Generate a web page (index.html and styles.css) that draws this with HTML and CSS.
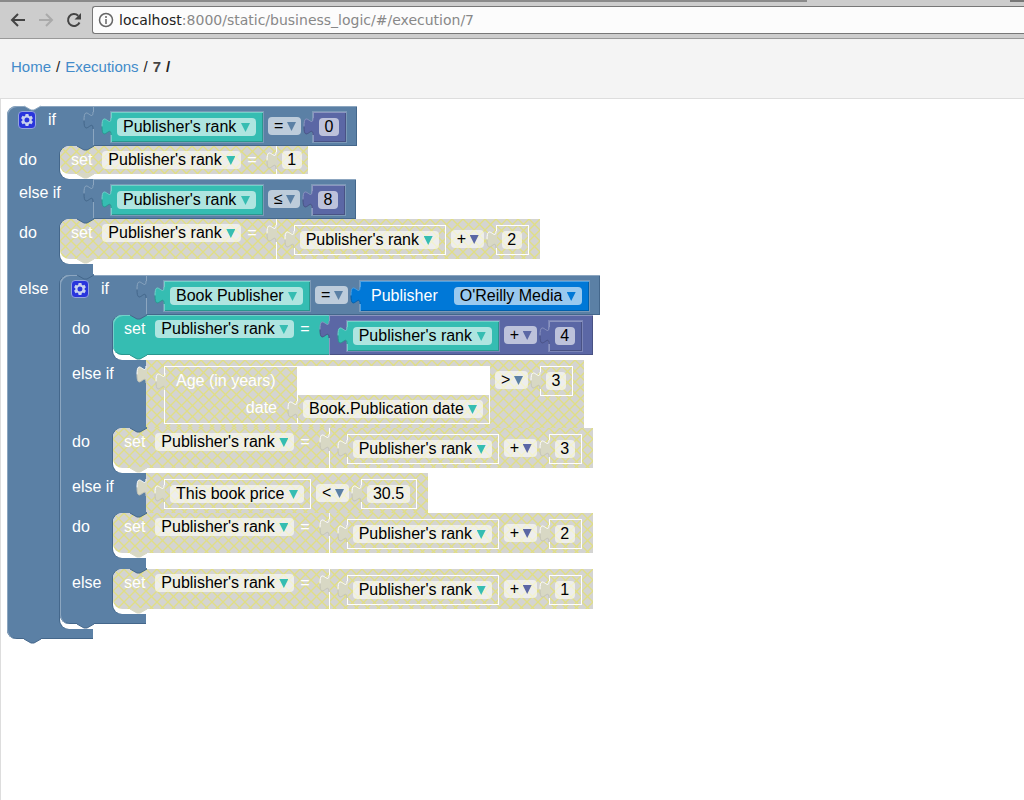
FILE: index.html
```html
<!DOCTYPE html>
<html lang="en">
<head>
<meta charset="utf-8">
<title>Execution 7</title>
<link rel="stylesheet" href="styles.css">
</head>
<body>
<svg class="symbols" aria-hidden="true">
  <symbol id="tab" viewBox="0 0 9 17" overflow="visible"><path class="tab-fill" d="M10 0H9c0 11-9-9-9 8.500s9-3 9 8.500h1z"/><path class="tab-line" d="M9 0c0 11-9-9-9 8.500"/><path class="tab-shade" d="M0 8.500c0 17.500 9-3 9 8.500"/></symbol>
  <symbol id="notch" viewBox="0 0 17 5" overflow="visible"><path class="notch-fill" d="M0-1V0l7 4h3l7-4v-1z"/><path class="notch-line" d="M0 0l7 4h3l7-4"/></symbol>
  <symbol id="gear" viewBox="1 1 16 16"><path fill="#c8d2ee" fill-rule="evenodd" d="M7.600 3h2.800l.4 1.800 1 .6 1.700-.6 1.400 2.400-1.300 1.200v1.200l1.300 1.200-1.400 2.400-1.700-.6-1 .6-.4 1.800H7.600l-.4-1.800-1-.6-1.700.6-1.400-2.400 1.300-1.200V8.400L3.100 7.200l1.400-2.400 1.700.6 1-.6zM9 6.500a2.500 2.500 0 1 0 0 5 2.500 2.500 0 0 0 0-5z"/></symbol>
</svg>

<header class="browser">
  <div class="tabs"><span class="tab-back"></span><span class="tab-front"></span><span class="tab-rest"></span></div>
  <div class="toolbar">
    <button class="nav" type="button" aria-label="Back"><svg viewBox="0 0 16 16"><path d="M15 8H2M8 2L2 8l6 6"/></svg></button>
    <button class="nav faded" type="button" aria-label="Forward"><svg viewBox="0 0 16 16"><path d="M1 8h13M8 2l6 6-6 6"/></svg></button>
    <button class="nav" type="button" aria-label="Reload"><svg viewBox="0 0 16 16"><path d="M13.500 10.500a6 6 0 1 1-1.300-6.800"/><path class="solid" d="M15 1v6.500H8.500z"/></svg></button>
    <label class="address">
      <svg class="info" viewBox="0 0 16 16"><circle cx="8" cy="8" r="6.500"/><path d="M8 7v5M8 4v2"/></svg>
      <span class="host">localhost</span><input class="path" type="text" value=":8000/static/business_logic/#/execution/7" aria-label="Address">
    </label>
  </div>
</header>

<nav class="crumbs" aria-label="Breadcrumb">
  <a href="#">Home</a><span>/</span><a href="#">Executions</a><span>/</span><b>7</b><b class="last">/</b>
</nav>

<main class="workspace">
<div class="if-block logic root">
  <svg class="notch top"><use href="#notch"/></svg>
  <div class="row">
    <div class="side first"><button class="gear" type="button" aria-label="Edit conditions"><svg><use href="#gear"/></svg></button><span>if</span></div>
    <div class="value inline logic"><svg class="tab"><use href="#tab"/></svg>
      <div class="value boxed var"><svg class="tab"><use href="#tab"/></svg><label class="field"><select aria-label="Variable"><option>Publisher's rank</option></select><i class="arrow"></i></label></div>
      <label class="field op"><select aria-label="Operator"><option>=</option></select><i class="arrow"></i></label>
      <div class="value boxed math"><svg class="tab"><use href="#tab"/></svg><input class="num" value="0" aria-label="Number"></div>
    </div>
  </div>
  <div class="row">
    <div class="side narrow">do</div>
    <div class="slot"><div class="well">
      <div class="setter off var"><svg class="notch top"><use href="#notch"/></svg><svg class="notch bottom"><use href="#notch"/></svg>
        <div class="setter-head"><span>set</span><label class="field"><select aria-label="Variable"><option>Publisher's rank</option></select><i class="arrow"></i></label><span class="eq">=</span></div>
        <div class="value off math"><svg class="tab"><use href="#tab"/></svg><input class="num" value="1" aria-label="Number"></div>
      </div>
    </div></div>
  </div>
  <div class="row">
    <div class="side">else if</div>
    <div class="value inline logic"><svg class="tab"><use href="#tab"/></svg>
      <div class="value boxed var"><svg class="tab"><use href="#tab"/></svg><label class="field"><select aria-label="Variable"><option>Publisher's rank</option></select><i class="arrow"></i></label></div>
      <label class="field op"><select aria-label="Operator"><option>≤</option></select><i class="arrow"></i></label>
      <div class="value boxed math"><svg class="tab"><use href="#tab"/></svg><input class="num" value="8" aria-label="Number"></div>
    </div>
  </div>
  <div class="row">
    <div class="side narrow">do</div>
    <div class="slot"><div class="well">
      <div class="setter off var"><svg class="notch top"><use href="#notch"/></svg><svg class="notch bottom"><use href="#notch"/></svg>
        <div class="setter-head"><span>set</span><label class="field"><select aria-label="Variable"><option>Publisher's rank</option></select><i class="arrow"></i></label><span class="eq">=</span></div>
        <div class="value inline off math"><svg class="tab"><use href="#tab"/></svg>
          <div class="value boxed off var"><svg class="tab"><use href="#tab"/></svg><label class="field"><select aria-label="Variable"><option>Publisher's rank</option></select><i class="arrow"></i></label></div>
          <label class="field op"><select aria-label="Operator"><option>+</option></select><i class="arrow"></i></label>
          <div class="value boxed off math"><svg class="tab"><use href="#tab"/></svg><input class="num" value="2" aria-label="Number"></div>
        </div>
      </div>
    </div></div>
  </div>
  <div class="arm"></div>
  <div class="row">
    <div class="side narrow">else</div>
    <div class="slot"><div class="well">

      <div class="if-block logic">
        <svg class="notch top"><use href="#notch"/></svg><svg class="notch bottom"><use href="#notch"/></svg>
        <div class="row">
          <div class="side first"><button class="gear" type="button" aria-label="Edit conditions"><svg><use href="#gear"/></svg></button><span>if</span></div>
          <div class="value inline logic"><svg class="tab"><use href="#tab"/></svg>
            <div class="value boxed var"><svg class="tab"><use href="#tab"/></svg><label class="field"><select aria-label="Variable"><option>Book Publisher</option></select><i class="arrow"></i></label></div>
            <label class="field op"><select aria-label="Operator"><option>=</option></select><i class="arrow"></i></label>
            <div class="value boxed ref"><svg class="tab"><use href="#tab"/></svg><span class="ref-name">Publisher</span><label class="field"><select aria-label="Publisher"><option>O'Reilly Media</option></select><i class="arrow"></i></label></div>
          </div>
        </div>
        <div class="row">
          <div class="side narrow">do</div>
          <div class="slot"><div class="well">
            <div class="setter var"><svg class="notch top"><use href="#notch"/></svg><svg class="notch bottom"><use href="#notch"/></svg>
              <div class="setter-head"><span>set</span><label class="field"><select aria-label="Variable"><option>Publisher's rank</option></select><i class="arrow"></i></label><span class="eq">=</span></div>
              <div class="value inline math"><svg class="tab"><use href="#tab"/></svg>
                <div class="value boxed var"><svg class="tab"><use href="#tab"/></svg><label class="field"><select aria-label="Variable"><option>Publisher's rank</option></select><i class="arrow"></i></label></div>
                <label class="field op"><select aria-label="Operator"><option>+</option></select><i class="arrow"></i></label>
                <div class="value boxed math"><svg class="tab"><use href="#tab"/></svg><input class="num" value="4" aria-label="Number"></div>
              </div>
            </div>
          </div></div>
        </div>
        <div class="row">
          <div class="side">else if</div>
          <div class="value inline off logic"><svg class="tab"><use href="#tab"/></svg>
            <div class="value call off"><svg class="tab"><use href="#tab"/></svg>
              <div class="call-labels"><span>Age (in years)</span><span class="arg">date</span></div>
              <div class="call-inputs">
                <div class="hole"></div>
                <div class="value off var"><svg class="tab"><use href="#tab"/></svg><label class="field"><select aria-label="Date"><option>Book.Publication date</option></select><i class="arrow"></i></label></div>
              </div>
            </div>
            <label class="field op"><select aria-label="Operator"><option>&gt;</option></select><i class="arrow"></i></label>
            <div class="value boxed off math"><svg class="tab"><use href="#tab"/></svg><input class="num" value="3" aria-label="Number"></div>
          </div>
        </div>
        <div class="row">
          <div class="side narrow">do</div>
          <div class="slot"><div class="well">
            <div class="setter off var"><svg class="notch top"><use href="#notch"/></svg><svg class="notch bottom"><use href="#notch"/></svg>
              <div class="setter-head"><span>set</span><label class="field"><select aria-label="Variable"><option>Publisher's rank</option></select><i class="arrow"></i></label><span class="eq">=</span></div>
              <div class="value inline off math"><svg class="tab"><use href="#tab"/></svg>
                <div class="value boxed off var"><svg class="tab"><use href="#tab"/></svg><label class="field"><select aria-label="Variable"><option>Publisher's rank</option></select><i class="arrow"></i></label></div>
                <label class="field op"><select aria-label="Operator"><option>+</option></select><i class="arrow"></i></label>
                <div class="value boxed off math"><svg class="tab"><use href="#tab"/></svg><input class="num" value="3" aria-label="Number"></div>
              </div>
            </div>
          </div></div>
        </div>
        <div class="row">
          <div class="side">else if</div>
          <div class="value inline off logic"><svg class="tab"><use href="#tab"/></svg>
            <div class="value boxed off var"><svg class="tab"><use href="#tab"/></svg><label class="field"><select aria-label="Variable"><option>This book price</option></select><i class="arrow"></i></label></div>
            <label class="field op"><select aria-label="Operator"><option>&lt;</option></select><i class="arrow"></i></label>
            <div class="value boxed off math"><svg class="tab"><use href="#tab"/></svg><input class="num wide" value="30.5" aria-label="Number"></div>
          </div>
        </div>
        <div class="row">
          <div class="side narrow">do</div>
          <div class="slot"><div class="well">
            <div class="setter off var"><svg class="notch top"><use href="#notch"/></svg><svg class="notch bottom"><use href="#notch"/></svg>
              <div class="setter-head"><span>set</span><label class="field"><select aria-label="Variable"><option>Publisher's rank</option></select><i class="arrow"></i></label><span class="eq">=</span></div>
              <div class="value inline off math"><svg class="tab"><use href="#tab"/></svg>
                <div class="value boxed off var"><svg class="tab"><use href="#tab"/></svg><label class="field"><select aria-label="Variable"><option>Publisher's rank</option></select><i class="arrow"></i></label></div>
                <label class="field op"><select aria-label="Operator"><option>+</option></select><i class="arrow"></i></label>
                <div class="value boxed off math"><svg class="tab"><use href="#tab"/></svg><input class="num" value="2" aria-label="Number"></div>
              </div>
            </div>
          </div></div>
        </div>
        <div class="arm"></div>
        <div class="row">
          <div class="side narrow">else</div>
          <div class="slot"><div class="well">
            <div class="setter off var"><svg class="notch top"><use href="#notch"/></svg><svg class="notch bottom"><use href="#notch"/></svg>
              <div class="setter-head"><span>set</span><label class="field"><select aria-label="Variable"><option>Publisher's rank</option></select><i class="arrow"></i></label><span class="eq">=</span></div>
              <div class="value inline off math"><svg class="tab"><use href="#tab"/></svg>
                <div class="value boxed off var"><svg class="tab"><use href="#tab"/></svg><label class="field"><select aria-label="Variable"><option>Publisher's rank</option></select><i class="arrow"></i></label></div>
                <label class="field op"><select aria-label="Operator"><option>+</option></select><i class="arrow"></i></label>
                <div class="value boxed off math"><svg class="tab"><use href="#tab"/></svg><input class="num" value="1" aria-label="Number"></div>
              </div>
            </div>
          </div></div>
        </div>
        <div class="arm foot"></div>
      </div>

    </div></div>
  </div>
  <div class="arm foot"></div>
  <svg class="notch bottom"><use href="#notch"/></svg>
</div>
</main>
</body>
</html>
```
FILE: styles.css
```css
* { box-sizing: border-box; }

body {
  margin: 0;
  min-height: 100vh;
  display: flex;
  flex-direction: column;
  background: #fff;
  font: 16px/18px "Liberation Sans", Arial, sans-serif;
}

.symbols { position: absolute; width: 0; height: 0; }

/* Browser bar */
.browser { background: #cdcdcd; border-bottom: 1px solid #999; }
.tabs { display: flex; height: 2px; }
.tab-back { flex: 807; background: #8a8a8a; }
.tab-front { flex: 203; }
.tab-rest { flex: 14; background: #777; }
.toolbar { display: flex; align-items: center; height: 36px; padding-left: 10px; gap: 12px; }
.nav { width: 16px; height: 16px; padding: 0; border: 0; background: none; }
.nav svg { display: block; width: 16px; height: 16px; fill: none; stroke: #444; stroke-width: 2; }
.nav .solid { fill: #444; stroke: none; }
.nav.faded svg { stroke: #aaa; }
.address {
  flex: 1;
  display: flex;
  align-items: center;
  height: 28px;
  margin-left: -2px;
  padding-left: 5px;
  border: 1px solid #777;
  border-right: 0;
  border-radius: 3px 0 0 3px;
  background: #fcfcfc;
  font: 14px/18px "DejaVu Sans", sans-serif;
}
.info { width: 16px; height: 16px; margin-right: 5px; fill: none; stroke: #666; stroke-width: 1.500; }
.host { color: #222; }
.path { flex: 1; min-width: 0; padding: 0; border: 0; background: none; font: inherit; color: #888; }

/* Breadcrumb */
.crumbs {
  display: flex;
  align-items: center;
  gap: 5px;
  height: 60px;
  padding: 0 11px 4px;
  background: #f4f4f4;
  border-bottom: 1px solid #ddd;
  font-size: 15px;
  color: #222;
}
.crumbs a { color: #428bca; text-decoration: none; }
.crumbs b:not(.last) { color: #444; }

/* Workspace */
.workspace {
  flex: 1;
  padding: 7px 0 0 6px;
  border-left: 1px solid #ddd;
  background: #fff;
  color: #fff;
}

.logic { --c: #5b80a5; --hi: #8ca6c0; --lo: #44678b; }
.math { --c: #5b67a5; --hi: #8c95c0; --lo: #495284; }
.var { --c: #35bdb2; --hi: #72d1c9; --lo: #2a978e; }
.ref { --c: #0078d7; --hi: #4da1e3; --lo: #0060ac; }

.if-block { position: relative; width: max-content; }
.row { display: flex; }
.side {
  width: 86px;
  padding: 5px 0 0 12px;
  background: #5b80a5;
  box-shadow: inset 1px 0 #8ca6c0;
}
.narrow { width: 53px; }
.first { display: flex; gap: 12px; padding-left: 11px; border-radius: 9px 0 0 0; box-shadow: inset 1px 1px #8ca6c0; }
.arm { width: 86px; height: 11px; background: #5b80a5; box-shadow: inset 1px 0 #8ca6c0; }
.foot { height: 10px; border-radius: 0 0 0 9px; box-shadow: inset 1px 0 #8ca6c0, inset 0 -1px #44678b; }

.slot { background: linear-gradient(#5b80a5, #5b80a5) left / 12px 100% no-repeat; }
.well {
  padding-bottom: 5px;
  border-radius: 9px 0 0 9px;
  background: #fff;
  box-shadow: -1px 0 #44678b;
}

.gear { width: 18px; height: 18px; padding: 0; border: 1px solid #94a4dd; border-radius: 4px; background: #2935dc; }
.gear svg { display: block; width: 16px; height: 16px; }

/* Connectors lie over the block edges */
.tab { position: absolute; left: -9px; top: 6px; width: 9px; height: 17px; overflow: visible; }
.tab-fill { fill: var(--c); }
.tab-line { fill: none; stroke: var(--hi); }
.tab-shade { fill: none; stroke: var(--lo); }
.notch { position: absolute; left: 17px; z-index: 1; width: 17px; height: 5px; overflow: visible; }
.notch.top { top: 0; --fill: #5b80a5; --edge: #44678b; }
.notch.bottom { bottom: -5px; --fill: var(--c); --edge: var(--lo); }
.notch-fill { fill: var(--fill); }
.notch-line { fill: none; stroke: var(--edge); }
.root > .notch.top { --fill: #fff; --edge: #8ca6c0; }

/* Statement blocks */
.setter { position: relative; display: flex; width: max-content; border-radius: 9px 0 0 9px; background-color: var(--c); box-shadow: inset 1px 1px var(--hi), inset 0 -1px var(--lo); }
.setter-head { display: flex; align-items: flex-start; height: 28px; padding: 5px 19px 0 11px; }
.setter-head .field { margin: 0 6px 0 10px; }

/* Value blocks */
.value { position: relative; display: flex; align-items: flex-start; padding: 5px 6px; background-color: var(--c); box-shadow: inset 1px 1px var(--hi), inset -1px -1px var(--lo); }
.inline { padding: 6px 11px 4px 18px; }
.boxed { height: 30px; padding: 6px 7px 6px 6px; box-shadow: inset 1px 1px var(--hi), inset -1px -1px var(--lo), 0 0 0 1px rgb(255 255 255 / 20%); }
.ref-name { padding: 0 16px 0 5px; }

.off {
  --hatch: #e0de86;
  background-color: #d4d4d2;
  background-image:
    linear-gradient(45deg, var(--hatch) 3%, transparent 6% 44%, var(--hatch) 47% 53%, transparent 56% 94%, var(--hatch) 97%),
    linear-gradient(-45deg, var(--hatch) 3%, transparent 6% 44%, var(--hatch) 47% 53%, transparent 56% 94%, var(--hatch) 97%);
  background-size: 11px 11px;
  box-shadow: none;
}
.off > .tab { --c: #d8d8c4; --hi: #fff; --lo: #c4c4b8; }
.off > .notch.bottom { --fill: #d8d8c4; --edge: #d8d8c4; }
.setter.off > .value { box-shadow: inset 1px 0 #fff; }
.off.boxed { box-shadow: inset 0 0 0 1px #fff; }

/* Function call with a stacked argument */
.call { padding: 0; border: 1px solid #fff; }
.call-labels { display: flex; flex-direction: column; gap: 9px; width: 132px; padding: 5px 20px 5px 11px; }
.arg { align-self: flex-end; }
.hole { height: 28px; background: #fff; }
.call-inputs .value { height: 28px; box-shadow: inset 1px 0 #fff; }

/* Fields */
.field { display: flex; align-items: center; gap: 4px; height: 18px; padding: 0 6px; border-radius: 4px; background: rgb(255 255 255 / 60%); }
.field select { appearance: none; height: 18px; padding: 0; border: 0; background: none; font: inherit; color: #000; }
.arrow { width: 9px; height: 9px; margin-top: 1px; background: var(--c); clip-path: polygon(0 0, 100% 0, 50% 100%); }
.op { margin: 5px 12px 0 5px; padding-right: 5px; gap: 3px; }
.num { width: 20px; height: 18px; padding: 0; border: 0; border-radius: 4px; background: rgb(255 255 255 / 60%); font: inherit; color: #000; text-align: center; }
.wide { width: 43px; }
```
